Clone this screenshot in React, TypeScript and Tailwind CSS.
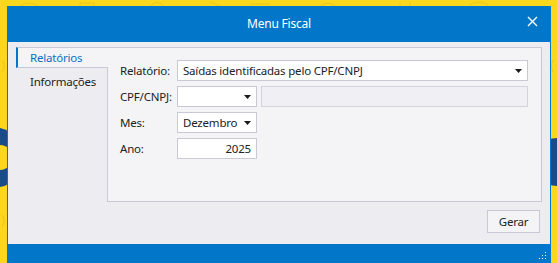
import React from 'react'

const font = { fontFamily: '"Noto Sans", "Open Sans", sans-serif' }

function Caret() {
  return (
    <svg width="7" height="4" viewBox="0 0 7 4" className="shrink-0">
      <path d="M0 0H7L3.5 4Z" fill="#1b1b1b" />
    </svg>
  )
}

function Select({ value, className }: { value: string; className: string }) {
  return (
    <div className={`h-[21px] flex items-center justify-between pl-[5px] pr-[5px] bg-white border border-[#c9c9d6] ${className}`}>
      <span className="whitespace-nowrap">{value}</span>
      <Caret />
    </div>
  )
}

function Row({ label, children }: { label: string; children: React.ReactNode }) {
  return (
    <div className="flex items-center">
      <div className="w-[57px] shrink-0 whitespace-nowrap">{label}</div>
      {children}
    </div>
  )
}

export default function App() {
  return (
    <div className="relative w-[557px] h-[263px] overflow-hidden bg-[#fbd71e] text-[11.5px] tracking-[-0.2px] leading-none text-[#222]" style={font}>
      {/* background decoration */}
      <svg className="absolute inset-0" width="557" height="263" viewBox="0 0 557 263">
        <g fill="none" stroke="#efc81a" strokeWidth="1.2">
          <path d="M20 6c6-4 12-4 18 0" />
          <path d="M80 3h14v5H80z" />
          <path d="M150 7c4-6 10-6 14 0" />
          <path d="M210 2l10 4" />
          <path d="M250 4h20" />
          <path d="M320 7c5-5 11-5 16 0" />
          <path d="M400 2v6M410 2v6" />
          <path d="M470 5c6-4 12-4 18 0" />
          <path d="M2 60c3 4 3 8 0 12" />
          <path d="M2 215c3 4 3 8 0 12" />
          <path d="M553 60c-2 4-2 8 0 12" />
        </g>
        <path d="M0 128a30 30 0 0 1 0 59z" fill="#1c4a86" />
        <path d="M0 145a12 12 0 0 1 0 25z" fill="#fbd71e" />
        <path d="M557 138a24 24 0 0 0 0 48z" fill="#1c4a86" />
      </svg>

      <div className="relative pl-[7px] pt-[6px] w-[551px]">
        <div className="flex flex-col h-[280px] border-x border-[#0277c9]">
          {/* title bar */}
          <div className="relative h-[36px] bg-[#0277c9] flex items-center justify-center text-white text-[12px]">
            <span className="-mt-[1px]">Menu Fiscal</span>
            <svg className="absolute right-[12px] top-[10px]" width="11" height="11" viewBox="0 0 11 11">
              <path d="M1 1L10 10M10 1L1 10" stroke="#fff" strokeWidth="1.4" />
            </svg>
          </div>

          {/* content */}
          <div className="h-[202px] bg-[#ededf1] pt-[5px] pl-[8px] pr-[8px] flex flex-col">
            <div className="flex h-[155px]">
              <div className="w-[91px] shrink-0 flex flex-col">
                <div className="relative z-10 -mr-px h-[21px] bg-[#f4f4f7] border-t border-b border-[#c9c9d6] border-l-2 border-l-[#0277c9] pl-[12px] flex items-center text-[#0b6fc4]">
                  Relatórios
                </div>
                <div className="h-[28px] pl-[14px] flex items-center">Informações</div>
              </div>
              <div className="flex-1 bg-[#f4f4f7] border border-[#c9c9d6] pt-[12px] pl-[12px] pr-[13px] flex flex-col gap-[5px]">
                <Row label="Relatório:">
                  <Select value="Saídas identificadas pelo CPF/CNPJ" className="flex-1" />
                </Row>
                <Row label="CPF/CNPJ:">
                  <Select value="" className="w-[80px]" />
                  <div className="ml-[4px] flex-1 h-[21px] bg-[#f0f0f4] border border-[#d3d3dd]" />
                </Row>
                <Row label="Mes:">
                  <Select value="Dezembro" className="w-[80px]" />
                </Row>
                <Row label="Ano:">
                  <div className="w-[80px] h-[21px] bg-white border border-[#c9c9d6] flex items-center justify-end pr-[5px]">2025</div>
                </Row>
              </div>
            </div>
            <div className="flex justify-end pt-[8px] pr-[2px]">
              <button className="w-[53px] h-[23px] bg-[#f4f4f7] border border-[#c9c9d6] flex items-center justify-center text-[#222]">
                Gerar
              </button>
            </div>
          </div>

          {/* status bar */}
          <div className="relative flex-1 bg-[#0277c9]">
            <svg className="absolute right-[3px] top-[8px]" width="8" height="8" viewBox="0 0 8 8">
              <g fill="#fff">
                <rect x="6" y="0" width="1" height="1" />
                <rect x="3" y="3" width="1" height="1" />
                <rect x="6" y="3" width="1" height="1" />
                <rect x="0" y="6" width="1" height="1" />
                <rect x="3" y="6" width="1" height="1" />
                <rect x="6" y="6" width="1" height="1" />
              </g>
            </svg>
          </div>
        </div>
      </div>
    </div>
  )
}
